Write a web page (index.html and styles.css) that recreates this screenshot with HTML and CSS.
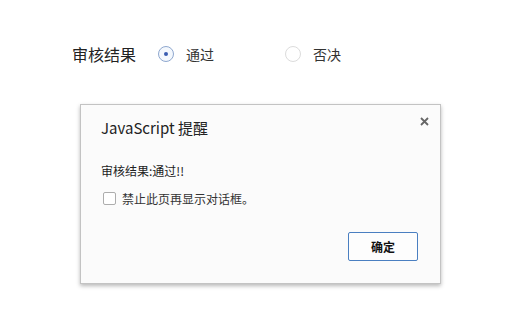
FILE: index.html
```html
<!DOCTYPE html>
<html lang="zh">
<head>
<meta charset="utf-8">
<link rel="stylesheet" href="styles.css">
</head>
<body>
<div class="form-row">
  <span class="label">审核结果</span>
  <label class="radio-item first">
    <span class="radio checked"><span class="dot"></span></span>
    <span class="radio-text">通过</span>
  </label>
  <label class="radio-item">
    <span class="radio"></span>
    <span class="radio-text">否决</span>
  </label>
</div>
<div class="dialog">
  <div class="title">JavaScript 提醒</div>
  <span class="close">
    <svg width="9" height="9" viewBox="0 0 9 9"><path d="M1 1L8 8M8 1L1 8" stroke="#666" stroke-width="1.8" fill="none"/></svg>
  </span>
  <div class="message">审核结果:通过!!</div>
  <div class="check-row">
    <span class="checkbox"></span>
    <span class="check-text">禁止此页再显示对话框。</span>
  </div>
  <div class="actions">
    <button class="ok">确定</button>
  </div>
</div>
</body>
</html>
```
FILE: styles.css
```css
html, body {
  margin: 0;
  padding: 0;
  background: #ffffff;
}
body {
  font-family: "Noto Sans CJK SC", "Noto Sans", sans-serif;
  color: #222;
  width: 513px;
  height: 317px;
  overflow: hidden;
}
.form-row {
  display: flex;
  align-items: center;
  padding: 43px 0 0 72px;
  height: 22px;
  font-size: 16px;
}
.label {
  color: #222;
  margin-right: 22px;
  line-height: 22px;
}
.radio-item {
  display: flex;
  align-items: center;
  color: #333;
  font-size: 14px;
}
.radio-item.first {
  width: 127px;
}
.radio {
  width: 14px;
  height: 14px;
  border: 1px solid #dcdcdc;
  border-radius: 50%;
  box-sizing: content-box;
  display: flex;
  align-items: center;
  justify-content: center;
  margin-right: 12px;
  background: #fff;
}
.radio.checked {
  border-color: #8fa8cf;
  background: #f4f8fd;
}
.dot {
  width: 4px;
  height: 4px;
  border-radius: 50%;
  background: #3a5db0;
}
.dialog {
  position: relative;
  margin: 39px 0 0 80px;
  height: 178px;
  border: 1px solid #c3c3c3;
  background: #fbfbfb;
  box-shadow: 0 2px 4px rgba(0,0,0,0.28);
  display: flex;
  flex-direction: column;
  padding: 0 22px 0 20px;
  box-sizing: content-box;
  width: 317px;
}
.title {
  margin-top: 13px;
  font-size: 15px;
  line-height: 20px;
  color: #222;
}
.close {
  position: absolute;
  right: 11px;
  top: 12px;
  display: block;
  width: 9px;
  height: 9px;
}
.close svg {
  display: block;
}
.message {
  margin-top: 25px;
  font-size: 12px;
  line-height: 16px;
  color: #222;
}
.check-row {
  margin-top: 11px;
  display: flex;
  align-items: center;
  height: 16px;
}
.checkbox {
  width: 11px;
  height: 11px;
  border: 1px solid #adadad;
  border-radius: 2px;
  background: #fff;
  margin-left: 2px;
  margin-right: 6px;
}
.check-text {
  font-size: 12px;
  color: #333;
}
.actions {
  margin-top: 26px;
  display: flex;
  justify-content: flex-end;
}
.ok {
  width: 70px;
  height: 29px;
  border: 1px solid #4a7fc1;
  border-radius: 2px;
  background: #fdfdfd;
  font-family: "Noto Sans CJK SC", sans-serif;
  font-size: 12px;
  font-weight: bold;
  color: #111;
  padding: 0;
}
```
